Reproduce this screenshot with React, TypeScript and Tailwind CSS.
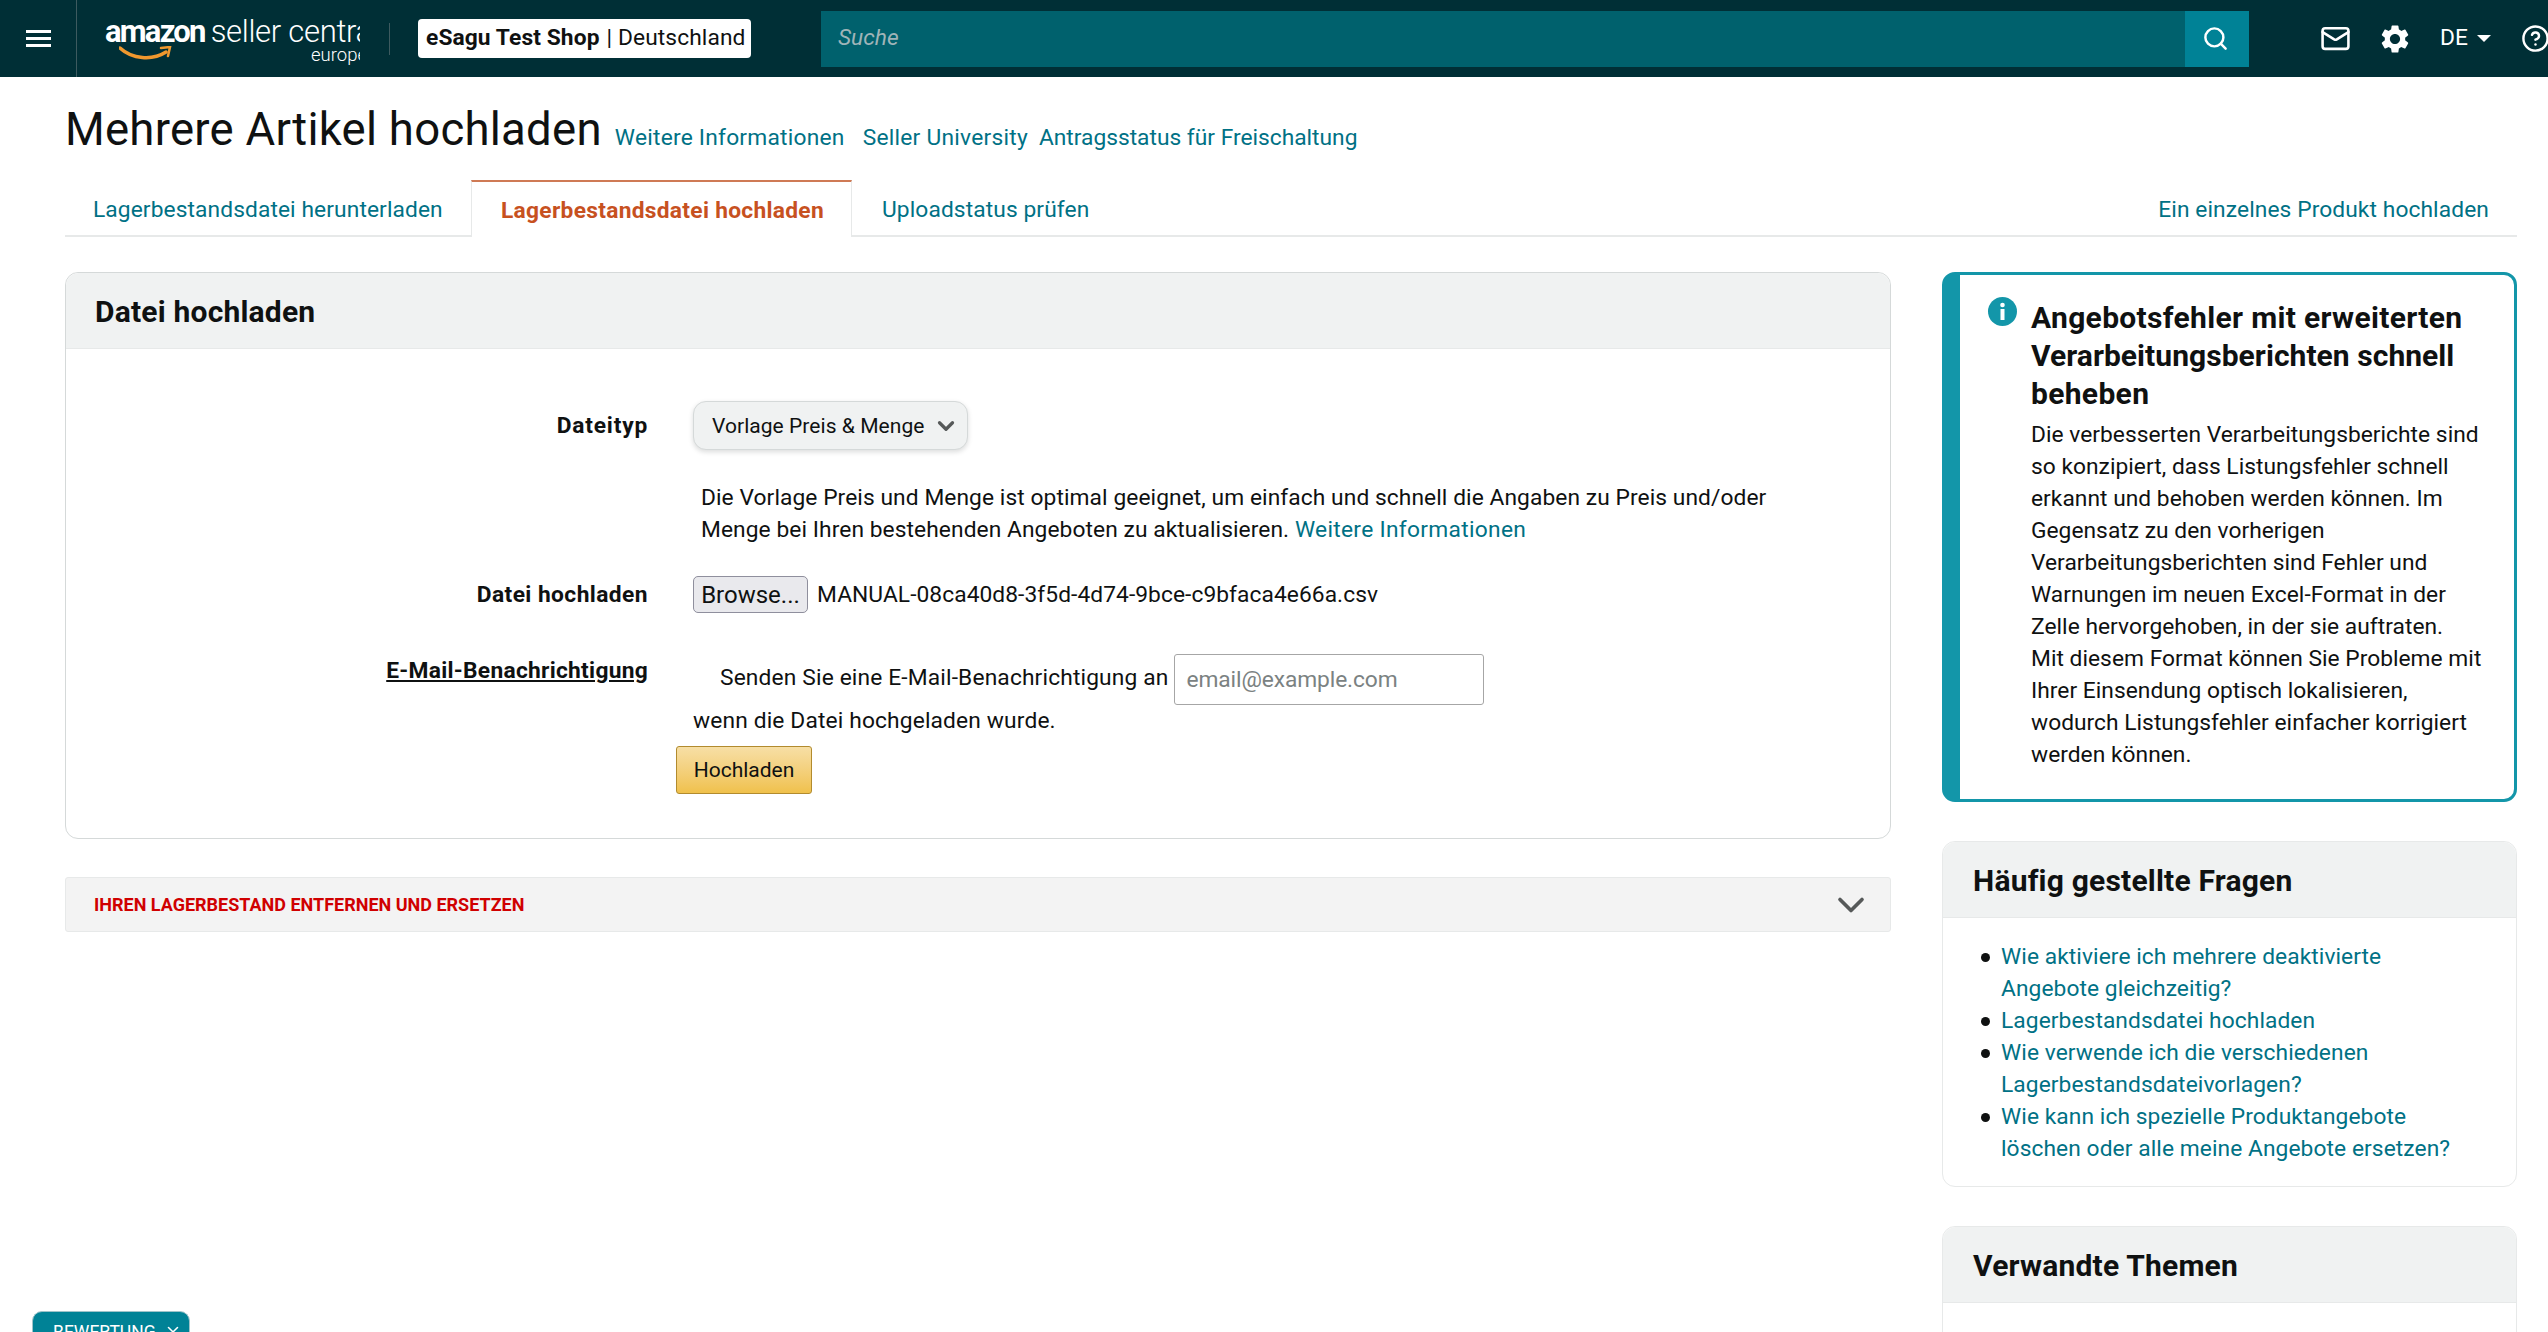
import { ChevronDown, CircleHelp, Mail, Search, X } from 'lucide-react'
import { MdSettings } from 'react-icons/md'

const infoLines = [
  'Die verbesserten Verarbeitungsberichte sind',
  'so konzipiert, dass Listungsfehler schnell',
  'erkannt und behoben werden können. Im',
  'Gegensatz zu den vorherigen',
  'Verarbeitungsberichten sind Fehler und',
  'Warnungen im neuen Excel-Format in der',
  'Zelle hervorgehoben, in der sie auftraten.',
  'Mit diesem Format können Sie Probleme mit',
  'Ihrer Einsendung optisch lokalisieren,',
  'wodurch Listungsfehler einfacher korrigiert',
  'werden können.',
]

const faqs = [
  ['Wie aktiviere ich mehrere deaktivierte', 'Angebote gleichzeitig?'],
  ['Lagerbestandsdatei hochladen'],
  ['Wie verwende ich die verschiedenen', 'Lagerbestandsdateivorlagen?'],
  ['Wie kann ich spezielle Produktangebote', 'löschen oder alle meine Angebote ersetzen?'],
]

function Header() {
  return (
    <header className="flex h-[77px] items-center bg-[#002f36] text-white">
      <div className="flex h-full w-[77px] shrink-0 items-center justify-center border-r border-[#3d5a5f]">
        <div className="flex w-[25px] flex-col gap-[4px]">
          <span className="h-[3px] bg-white" />
          <span className="h-[3px] bg-white" />
          <span className="h-[3px] bg-white" />
        </div>
      </div>
      {/* logo is cut off on the right like in the real header */}
      <div className="relative ml-[28px] h-[60px] w-[255px] shrink-0 overflow-hidden">
        <div className="absolute left-0 top-[5px] whitespace-nowrap text-[31px] leading-[36px]">
          <span className="font-bold tracking-[-1.8px]">amazon</span>
          <span className="ml-[6px] font-light tracking-[-0.3px]">seller central</span>
        </div>
        <svg className="absolute left-[14px] top-[37px]" width="54" height="18" viewBox="0 0 54 18" fill="none">
          <path d="M1 2c12 11 32 13 46 4" stroke="#f0982e" strokeWidth="3.5" strokeLinecap="round" />
          <path d="M42 2l9-1-2 9" stroke="#f0982e" strokeWidth="2.5" strokeLinecap="round" />
        </svg>
        <div className="absolute left-[206px] top-[34px] whitespace-nowrap text-[18.5px] font-light leading-[24px]">europe</div>
      </div>
      <div className="ml-[29px] h-[32px] w-px shrink-0 bg-[#3d5a5f]" />
      <div className="ml-[28px] flex h-[39px] w-[333px] shrink-0 items-center whitespace-nowrap rounded-[4px] bg-white pl-[8px] text-[22.75px] text-[#0f1111]">
        <span className="font-bold tracking-[0.1px]">eSagu Test Shop</span>
        <span className="ml-[7px] tracking-[0.1px]">| Deutschland</span>
      </div>
      <div className="ml-[70px] flex h-[56px] w-[1428px] shrink-0 items-center">
        <div className="flex h-full flex-1 items-center bg-[#00616d] pl-[17px] text-[22.75px] italic text-[#9fb4b8]">Suche</div>
        <div className="flex h-full w-[64px] items-center justify-center bg-[#008296] pr-[3px]">
          <Search size={27} strokeWidth={2.2} />
        </div>
      </div>
      <Mail className="ml-[71px] shrink-0" size={31} strokeWidth={2} />
      <MdSettings className="ml-[27px] shrink-0" size={34} />
      <span className="ml-[28px] shrink-0 text-[22.75px]">DE</span>
      <span className="ml-[9px] h-0 w-0 shrink-0 border-x-[7px] border-t-[7px] border-x-transparent border-t-white" />
      <CircleHelp className="ml-[30px] shrink-0" size={29} strokeWidth={2} />
    </header>
  )
}

function TitleArea() {
  return (
    <>
      <div className="ml-[65px] flex h-[103px] items-baseline pt-[22px]">
        <h1 className="text-[45.5px] leading-[62px] tracking-[0.26px] text-[#0f1111]">Mehrere Artikel hochladen</h1>
        <a className="ml-[13px] text-[22.75px] tracking-[0.23px] text-[#007185]">Weitere Informationen</a>
        <a className="ml-[18px] text-[22.75px] tracking-[0.25px] text-[#007185]">Seller University</a>
        <a className="ml-[11px] text-[22.75px] text-[#007185]">Antragsstatus für Freischaltung</a>
      </div>
      <div className="ml-[65px] mr-[31px] flex h-[57px] items-stretch border-b-2 border-[#e7e9e9] text-[22.75px]">
        <a className="flex w-[406px] items-center pl-[28px] pt-[5px] tracking-[0.1px] text-[#007185]">Lagerbestandsdatei herunterladen</a>
        <a className="mb-[-2px] flex w-[381px] items-center border-x border-t-2 border-x-[#e7e9e9] border-t-[#cf7a55] bg-white pl-[29px] pt-[3px] font-bold tracking-[0.29px] text-[#c7511f]">
          Lagerbestandsdatei hochladen
        </a>
        <a className="flex items-center pl-[30px] pt-[5px] tracking-[0.1px] text-[#007185]">Uploadstatus prüfen</a>
        <a className="ml-auto flex items-center pr-[28px] pt-[5px] tracking-[0.1px] text-[#007185]">Ein einzelnes Produkt hochladen</a>
      </div>
    </>
  )
}

function UploadCard() {
  return (
    <div className="h-[567px] rounded-[13px] border border-[#d5d9d9]">
      <div className="flex h-[76px] items-center rounded-t-[13px] border-b border-[#e7e9e9] bg-[#f0f2f2] pl-[29px] pt-[2px] text-[30px] font-bold tracking-[0.2px] text-[#0f1111]">
        Datei hochladen
      </div>
      <div className="text-[22.75px] leading-[32px] text-[#0f1111]">
        <div className="mt-[52px] flex items-center">
          <label className="w-[582px] text-right font-bold tracking-[0.8px]">Dateityp</label>
          <div className="ml-[45px] flex h-[49px] w-[275px] items-center rounded-[13px] border border-[#d5d9d9] bg-[#f0f2f2] pl-[18px] text-[21px] shadow-[0_2px_5px_rgba(15,17,17,0.15)]">
            <span className="tracking-[0.05px]">Vorlage Preis &amp; Menge</span>
            <ChevronDown className="ml-[9px] text-[#565959]" size={26} strokeWidth={3} />
          </div>
        </div>
        <p className="ml-[635px] mt-[32px] whitespace-nowrap tracking-[0.08px]">
          Die Vorlage Preis und Menge ist optimal geeignet, um einfach und schnell die Angaben zu Preis und/oder
          <br />
          Menge bei Ihren bestehenden Angeboten zu aktualisieren.{' '}
          <a className="tracking-[0.3px] text-[#007185]">Weitere Informationen</a>
        </p>
        <div className="mt-[30px] flex items-center">
          <label className="w-[582px] text-right font-bold tracking-[0.43px]">Datei hochladen</label>
          <button className="ml-[45px] h-[37px] w-[115px] rounded-[5px] border border-[#8f8f9d] bg-[#e9e9ed] text-center text-[24px] leading-[32px]">
            Browse...
          </button>
          <span className="ml-[9px] tracking-[0.07px]">MANUAL-08ca40d8-3f5d-4d74-9bce-c9bfaca4e66a.csv</span>
        </div>
        <div className="mt-[41px] flex items-start">
          <label className="w-[582px] pt-[1px] text-right font-bold tracking-[0.28px] underline">E-Mail-Benachrichtigung</label>
          <div className="ml-[45px]">
            <div className="flex h-[51px] items-center pl-[27px] tracking-[0.15px]">
              <span className="mb-[3px]">Senden Sie eine E-Mail-Benachrichtigung an</span>
              <input
                className="ml-[6px] h-[51px] w-[310px] rounded-[3px] border border-[#a6a6a6] px-[11px] text-[22.75px] tracking-[-0.1px] placeholder:text-[#7b8282]"
                placeholder="email@example.com"
              />
            </div>
            <div className="tracking-[0.15px]">wenn die Datei hochgeladen wurde.</div>
            <button className="ml-[-17px] mt-[9px] h-[48px] w-[136px] rounded-[3px] border border-[#b28b2e] bg-gradient-to-b from-[#f7dfa5] to-[#f0c14b] text-[21px]">
              Hochladen
            </button>
          </div>
        </div>
      </div>
    </div>
  )
}

function Accordion() {
  return (
    <div className="mt-[38px] flex h-[55px] items-center justify-between rounded-[3px] border border-[#e7e9e9] bg-[#f3f3f3] pl-[28px] pr-[17px]">
      <span className="text-[18px] font-bold uppercase text-[#d00000]">Ihren Lagerbestand entfernen und ersetzen</span>
      <ChevronDown className="text-[#565959]" size={44} strokeWidth={2} />
    </div>
  )
}

function InfoBox() {
  return (
    <div className="flex rounded-[13px] border-[3px] border-l-[18px] border-[#1396a9] pb-[28px] pl-[28px] pt-[24px] text-[#0f1111]">
      <svg className="mr-[14px] mt-[-2px] shrink-0" width="29" height="29" viewBox="0 0 29 29">
        <circle cx="14.5" cy="14.5" r="14.5" fill="#1396a9" />
        <circle cx="14.5" cy="8" r="2.3" fill="white" />
        <rect x="12.5" y="12" width="4" height="11" fill="white" />
      </svg>
      <div className="whitespace-nowrap">
        <h3 className="text-[30px] font-bold leading-[38px] tracking-[0.33px]">
          Angebotsfehler mit erweiterten
          <br />
          <span className="tracking-[0.05px]">Verarbeitungsberichten schnell</span>
          <br />
          beheben
        </h3>
        <div className="mt-[6px] text-[22.75px] leading-[32px] tracking-[0.03px]">
          {infoLines.map((line) => (
            <div key={line}>{line}</div>
          ))}
        </div>
      </div>
    </div>
  )
}

function SideCard({ title, children }: { title: string; children?: React.ReactNode }) {
  return (
    <div className="mt-[39px] rounded-[13px] border border-[#e7e9e9]">
      <div className="flex h-[76px] items-center rounded-t-[13px] border-b border-[#e7e9e9] bg-[#f0f2f2] pl-[30px] pt-[2px] text-[30px] font-bold tracking-[0.2px] text-[#0f1111]">
        {title}
      </div>
      {children}
    </div>
  )
}

export default function App() {
  return (
    <div className="relative h-[1332px] w-[2548px] overflow-hidden bg-white font-['Roboto',sans-serif]">
      <Header />
      <TitleArea />
      <div className="ml-[65px] mt-[35px] flex items-start">
        <div className="w-[1826px]">
          <UploadCard />
          <Accordion />
        </div>
        <div className="ml-[51px] w-[575px]">
          <InfoBox />
          <SideCard title="Häufig gestellte Fragen">
            <ul className="pb-[21px] pl-[38px] pt-[23px] text-[22.75px] leading-[32px] tracking-[0.08px] text-[#007185]">
              {faqs.map((lines) => (
                <li key={lines[0]} className="flex">
                  <span className="mr-[11px] mt-[12px] h-[9px] w-[9px] shrink-0 rounded-full bg-[#0f1111]" />
                  <div>
                    {lines.map((line) => (
                      <div key={line} className="whitespace-nowrap">
                        {line}
                      </div>
                    ))}
                  </div>
                </li>
              ))}
            </ul>
          </SideCard>
          <SideCard title="Verwandte Themen">
            <div className="h-[200px]" />
          </SideCard>
        </div>
      </div>
      <div className="absolute left-[32px] top-[1311px] flex h-[40px] w-[158px] items-start rounded-[10px] border border-[#9fc3c9] bg-[#008296] pl-[20px] pt-[10px] text-[17.5px] uppercase leading-[20px] text-white">
        Bewertung
        <X className="ml-[8px] mt-[1px]" size={18} />
      </div>
    </div>
  )
}
